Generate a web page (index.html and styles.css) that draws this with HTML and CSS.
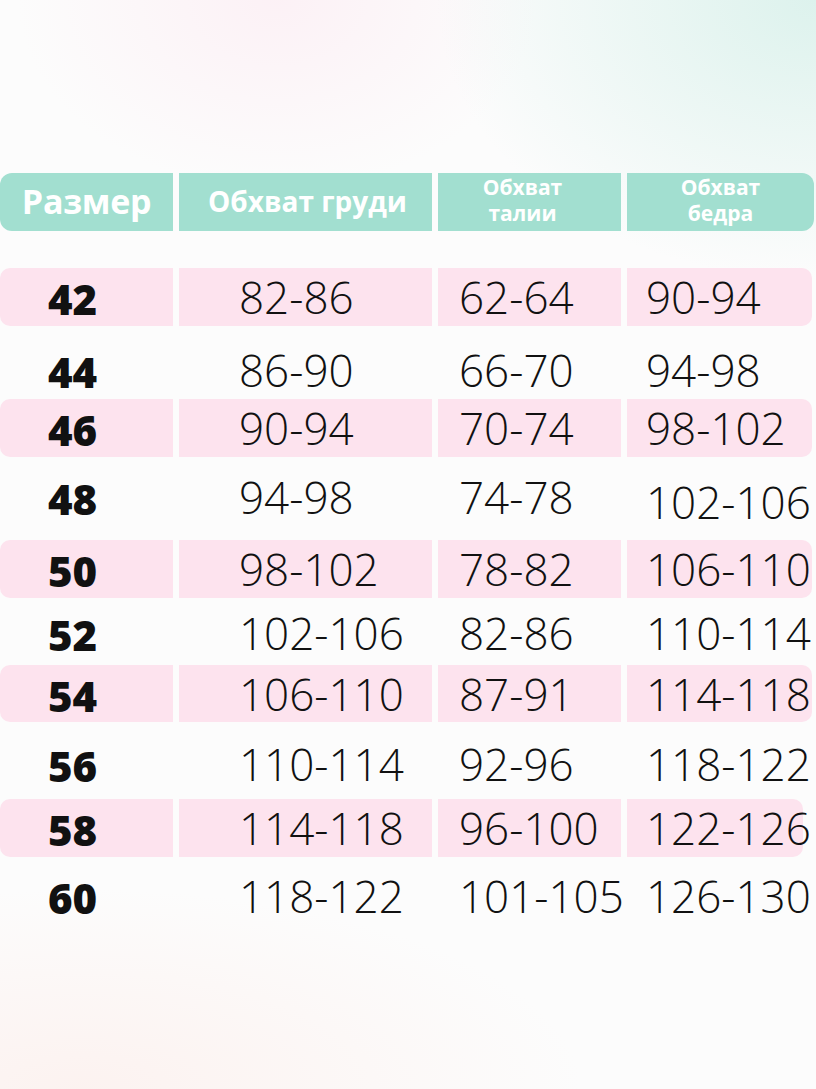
FILE: index.html
```html
<!DOCTYPE html>
<html lang="ru">
<head>
<meta charset="utf-8">
<title>Таблица размеров</title>
<link rel="stylesheet" href="styles.css">
</head>
<body>
<div class="page">
  <div class="table">
    <div class="row head">
      <div class="cell c1">Размер</div>
      <div class="cell c2">Обхват груди</div>
      <div class="cell c3 small">Обхват<br>талии</div>
      <div class="cell c4 small">Обхват<br>бедра</div>
    </div>
    <div class="row pink">
      <div class="cell c1">42</div><div class="cell c2">82-86</div><div class="cell c3">62-64</div><div class="cell c4">90-94</div>
    </div>
    <div class="row">
      <div class="cell c1">44</div><div class="cell c2">86-90</div><div class="cell c3">66-70</div><div class="cell c4">94-98</div>
    </div>
    <div class="row pink">
      <div class="cell c1">46</div><div class="cell c2">90-94</div><div class="cell c3">70-74</div><div class="cell c4">98-102</div>
    </div>
    <div class="row">
      <div class="cell c1">48</div><div class="cell c2">94-98</div><div class="cell c3">74-78</div><div class="cell c4 low">102-106</div>
    </div>
    <div class="row pink">
      <div class="cell c1">50</div><div class="cell c2">98-102</div><div class="cell c3">78-82</div><div class="cell c4">106-110</div>
    </div>
    <div class="row">
      <div class="cell c1">52</div><div class="cell c2">102-106</div><div class="cell c3">82-86</div><div class="cell c4">110-114</div>
    </div>
    <div class="row pink">
      <div class="cell c1">54</div><div class="cell c2">106-110</div><div class="cell c3">87-91</div><div class="cell c4">114-118</div>
    </div>
    <div class="row">
      <div class="cell c1">56</div><div class="cell c2">110-114</div><div class="cell c3">92-96</div><div class="cell c4">118-122</div>
    </div>
    <div class="row pink">
      <div class="cell c1">58</div><div class="cell c2">114-118</div><div class="cell c3">96-100</div><div class="cell c4">122-126</div>
    </div>
    <div class="row">
      <div class="cell c1">60</div><div class="cell c2">118-122</div><div class="cell c3">101-105</div><div class="cell c4">126-130</div>
    </div>
  </div>
</div>
</body>
</html>
```
FILE: styles.css
```css
*, *::before, *::after {
  box-sizing: border-box;
}
html, body {
  margin: 0;
  padding: 0;
}
body {
  width: 816px;
  height: 1089px;
  overflow: hidden;
  background:
    radial-gradient(ellipse 380px 280px at 100% 0%, rgba(170, 226, 212, 0.38), rgba(170, 226, 212, 0) 100%),
    radial-gradient(ellipse 260px 190px at 34% 0%, rgba(252, 228, 238, 0.45), rgba(252, 228, 238, 0) 100%),
    radial-gradient(ellipse 500px 200px at 10% 100%, rgba(252, 236, 232, 0.6), rgba(252, 236, 232, 0) 100%),
    #fcfcfc;
  font-family: "Open Sans", "DejaVu Sans", sans-serif;
  color: #111;
}
.page {
  padding-top: 173px;
}
.table {
  display: flex;
  flex-direction: column;
}
.row {
  display: grid;
  grid-template-columns: 173px 253px 183px 188px;
  column-gap: 6px;
  height: 58px;
}
.cell {
  display: flex;
  align-items: center;
  line-height: 1;
  font-size: 44px;
  font-weight: 300;
  white-space: nowrap;
}
.cell.c1 {
  font-weight: 800;
  font-size: 42px;
  padding-left: 48px;
  padding-top: 4px;
}
.cell.c2 { padding-left: 60px; }
.cell.c3 { padding-left: 21px; }
.cell.c4 { padding-left: 19px; }
.cell.low { padding-top: 10px; }

.head .cell {
  background: #a2dfd0;
  color: #fff;
  font-weight: 700;
  justify-content: center;
  padding: 0;
}
.head .c1 {
  border-radius: 12px 0 0 12px;
  font-size: 34px;
  padding: 0 0 2px 0;
  letter-spacing: -0.3px;
}
.head .c2 {
  font-size: 28px;
  padding-bottom: 2px;
  padding-left: 4px;
}
.head .small {
  font-size: 21px;
  line-height: 26px;
  text-align: center;
  padding-bottom: 4px;
}
.head .c3 { padding-right: 14px; }
.head .c4 {
  border-radius: 0 12px 12px 0;
  margin-right: 1px;
}

.pink .cell { background: #fde3ee; }
.pink .c1 { border-radius: 10px 0 0 10px; }
.pink .c4 { border-radius: 0 10px 10px 0; margin-right: 3px; }

.row:nth-child(2) { margin-top: 37px; }
.row:nth-child(3) { margin-top: 15px; }
.row:nth-child(4) { margin-top: 0; }
.row:nth-child(5) { margin-top: 11px; }
.row:nth-child(6) { margin-top: 14px; }
.row:nth-child(7) { margin-top: 6px; }
.row:nth-child(8) { margin-top: 3px; height: 57px; }
.row:nth-child(9) { margin-top: 13px; }
.row:nth-child(10) { margin-top: 6px; }
.row:nth-child(10) .c4 { margin-right: 12px; }
.row:nth-child(11) { margin-top: 10px; }
```
